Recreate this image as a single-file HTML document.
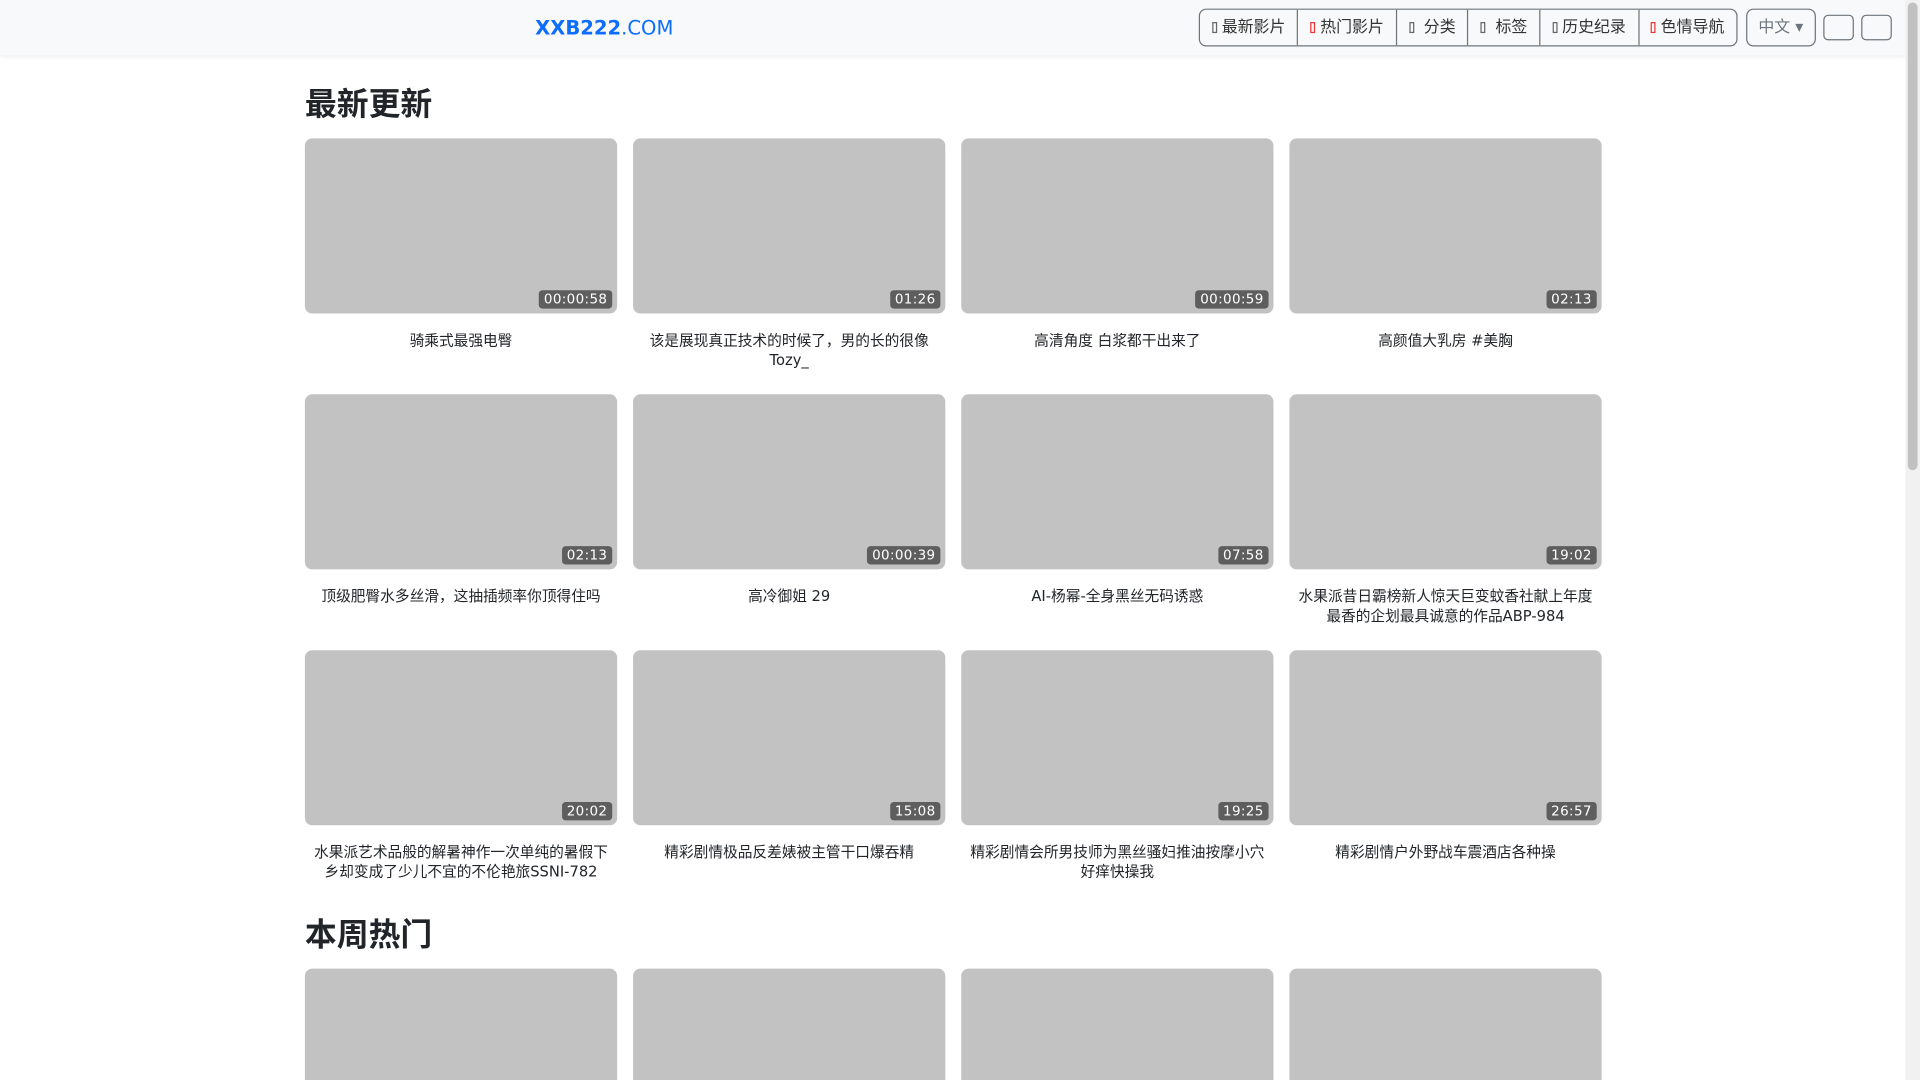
<!DOCTYPE html>
<html><head><meta charset="utf-8"><style>
*{box-sizing:border-box;margin:0;padding:0}
html,body{width:1920px;height:1080px;overflow:hidden;background:#fff}
#w{width:1568px;height:882px;overflow:hidden;transform:scale(1.22449);transform-origin:0 0;position:relative;font-family:"DejaVu Sans","Noto Sans CJK SC",sans-serif;color:#212529}
.nav{position:absolute;left:0;top:0;width:1556px;height:45px;background:#f8f9fa;box-shadow:0 1px 4px rgba(0,0,0,.08)}
.logo{position:absolute;left:437px;top:13px;font-size:16px;color:#0d6efd;letter-spacing:0}
.logo b{font-weight:bold}
.bg{position:absolute;left:979px;top:7px;width:440px;height:31px;display:flex;border:1px solid #6c757d;border-radius:6px;overflow:hidden}
.bg div{flex:auto;text-align:center;line-height:29px;font-size:13px;color:#333;border-left:1px solid #6c757d;white-space:nowrap}
.bg div:first-child{border-left:0}
.i{display:inline-block;width:4px;height:9px;border:1px solid #666;margin-right:4px;vertical-align:-1px}
.r{border-color:#e33}
.lang{position:absolute;left:1426px;top:7px;width:57px;height:31px;border:1px solid #6c757d;border-radius:6px;font-size:13px;color:#6c757d;line-height:29px;padding-left:9px}
.sb{position:absolute;top:12px;width:25px;height:21px;border:1px solid #6c757d;border-radius:4px}
.scroll{position:absolute;left:1556px;top:0;width:12px;height:882px;background:#f1f1f1}
.scroll div{position:absolute;left:2px;top:2px;width:8px;height:382px;background:#c1c1c1;border-radius:4px}
h2{position:absolute;left:249px;font-size:26px;font-weight:bold;line-height:1;font-family:"Liberation Sans","Noto Sans CJK SC",sans-serif}
.card{position:absolute;width:255px}
.th{height:143px;background:#c2c2c2;border-radius:6px;position:relative}
.d{position:absolute;right:4px;bottom:4px;background:#5e5e5e;color:#fff;font-size:11px;padding:1px 4px;border-radius:3px;letter-spacing:.3px}
.t{text-align:center;font-size:12px;line-height:16px;margin-top:14px;padding:0 4px}
</style></head><body><div id="w">
<div class="nav">
<div class="logo"><b>XXB222</b>.COM</div>
<div class="bg"><div><span class="i"></span>最新影片</div><div><span class="i r"></span>热门影片</div><div><span class="i"></span> 分类</div><div><span class="i"></span> 标签</div><div><span class="i"></span>历史纪录</div><div><span class="i r"></span>色情导航</div></div>
<div class="lang">中文 ▾</div>
<div class="sb" style="left:1489px"></div><div class="sb" style="left:1520px"></div>
</div>
<div class="scroll"><div></div></div>
<h2 style="top:72px">最新更新</h2>
<h2 style="top:750px">本周热门</h2>
<div class="card" style="left:249px;top:113px"><div class="th"><span class="d">00:00:58</span></div><div class="t">骑乘式最强电臀</div></div>
<div class="card" style="left:517px;top:113px"><div class="th"><span class="d">01:26</span></div><div class="t">该是展现真正技术的时候了，男的长的很像 Tozy_</div></div>
<div class="card" style="left:785px;top:113px"><div class="th"><span class="d">00:00:59</span></div><div class="t">高清角度 白浆都干出来了</div></div>
<div class="card" style="left:1053px;top:113px"><div class="th"><span class="d">02:13</span></div><div class="t">高颜值大乳房 #美胸</div></div>
<div class="card" style="left:249px;top:322px"><div class="th"><span class="d">02:13</span></div><div class="t">顶级肥臀水多丝滑，这抽插频率你顶得住吗</div></div>
<div class="card" style="left:517px;top:322px"><div class="th"><span class="d">00:00:39</span></div><div class="t">高冷御姐 29</div></div>
<div class="card" style="left:785px;top:322px"><div class="th"><span class="d">07:58</span></div><div class="t">AI-杨幂-全身黑丝无码诱惑</div></div>
<div class="card" style="left:1053px;top:322px"><div class="th"><span class="d">19:02</span></div><div class="t">水果派昔日霸榜新人惊天巨变蚊香社献上年度最香的企划最具诚意的作品ABP-984</div></div>
<div class="card" style="left:249px;top:531px"><div class="th"><span class="d">20:02</span></div><div class="t">水果派艺术品般的解暑神作一次单纯的暑假下乡却变成了少儿不宜的不伦艳旅SSNI-782</div></div>
<div class="card" style="left:517px;top:531px"><div class="th"><span class="d">15:08</span></div><div class="t">精彩剧情极品反差婊被主管干口爆吞精</div></div>
<div class="card" style="left:785px;top:531px"><div class="th"><span class="d">19:25</span></div><div class="t">精彩剧情会所男技师为黑丝骚妇推油按摩小穴好痒快操我</div></div>
<div class="card" style="left:1053px;top:531px"><div class="th"><span class="d">26:57</span></div><div class="t">精彩剧情户外野战车震酒店各种操</div></div>
<div class="card" style="left:249px;top:791px"><div class="th"></div></div>
<div class="card" style="left:517px;top:791px"><div class="th"></div></div>
<div class="card" style="left:785px;top:791px"><div class="th"></div></div>
<div class="card" style="left:1053px;top:791px"><div class="th"></div></div>
</div></body></html>
